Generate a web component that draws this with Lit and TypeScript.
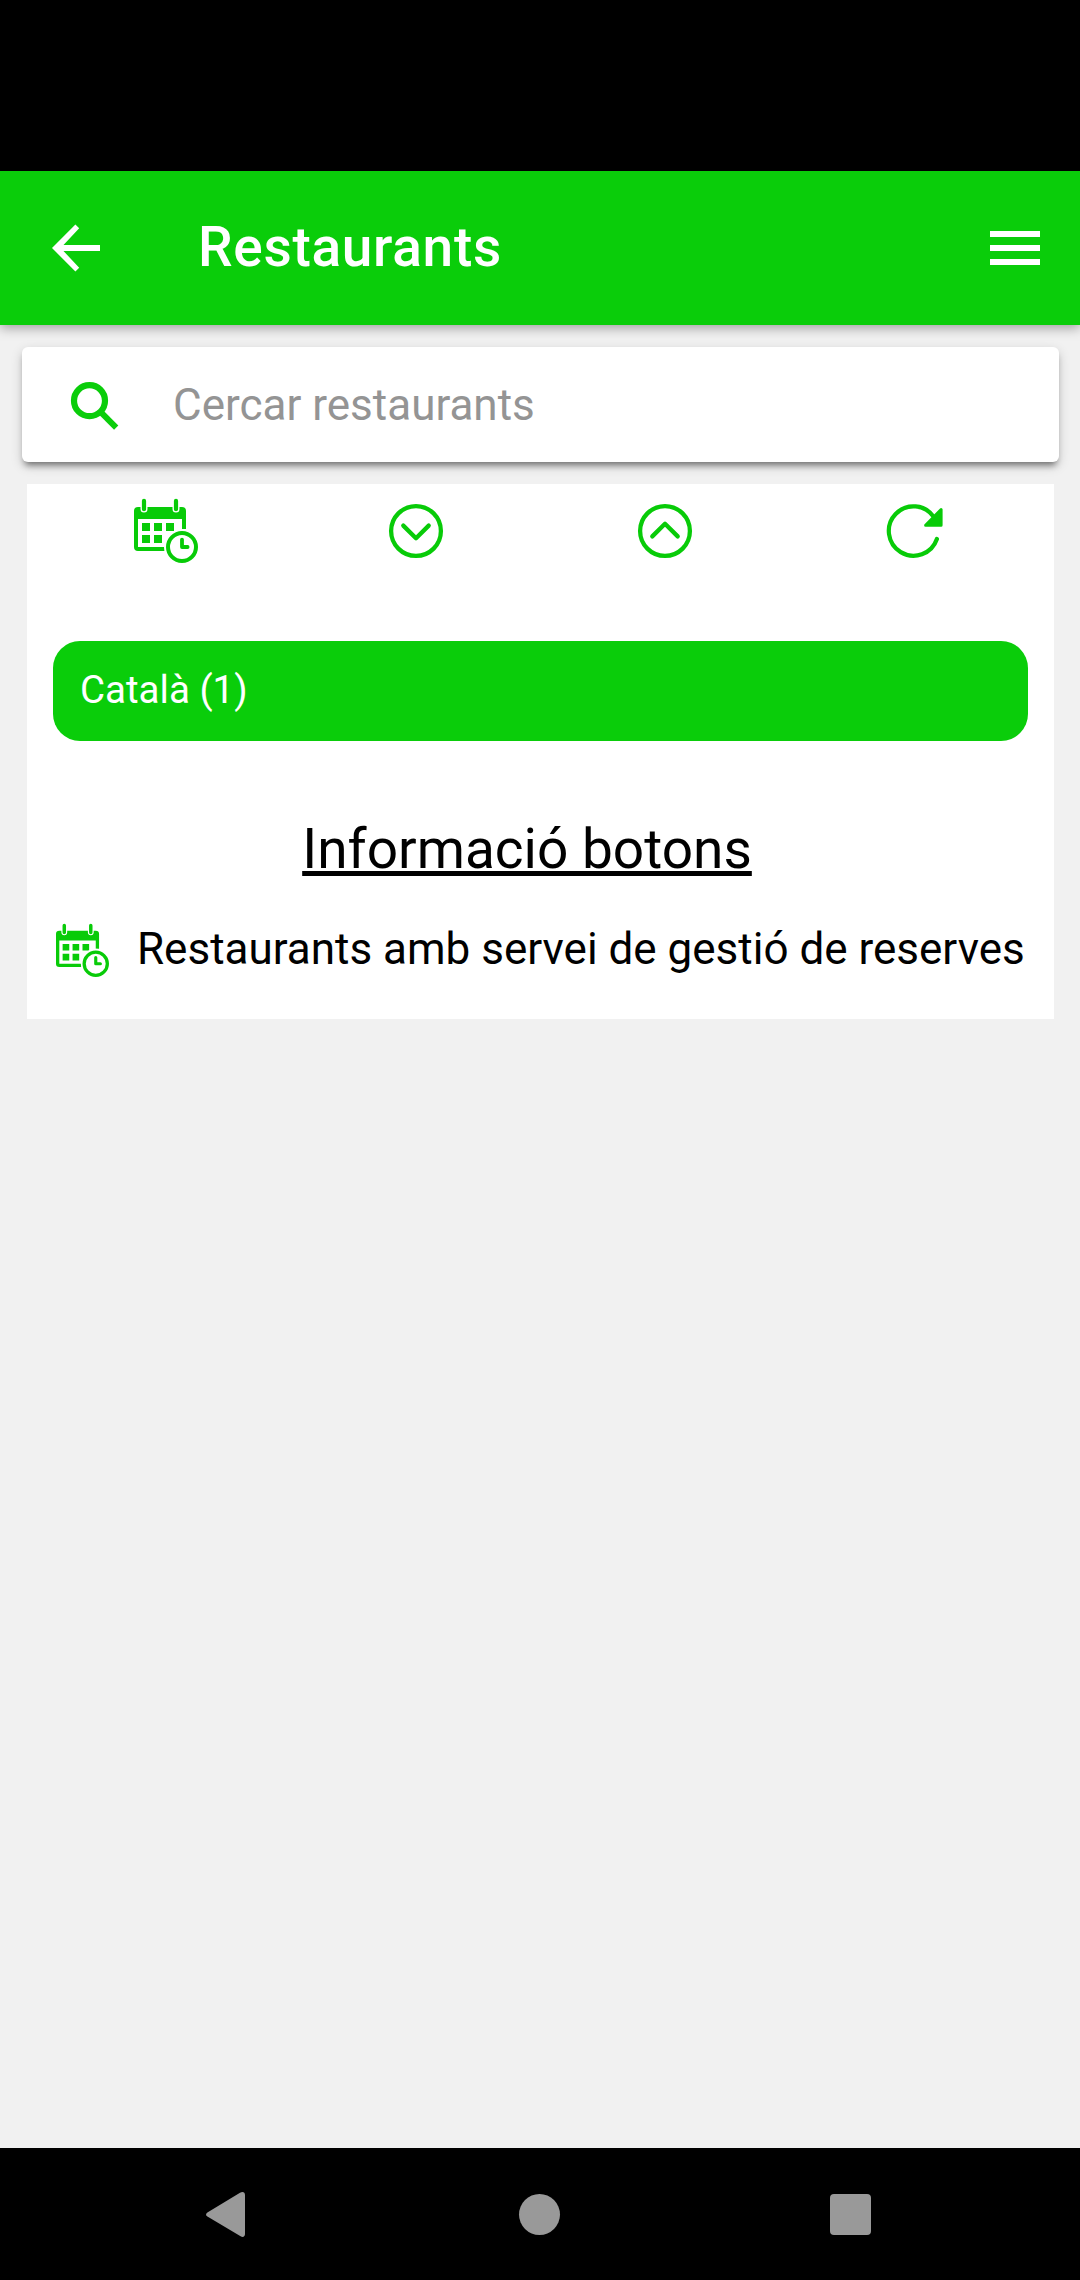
import { LitElement, html, css, svg } from "lit";
import { customElement, property } from "lit/decorators.js";

const shapes: Record<string, { box: string; body: unknown }> = {
  back: {
    box: "0 0 48 48",
    body: svg`<path fill="currentColor" d="M48 21H11.5L27.2 4.2 23.4 .5 0 24 23.4 47.5 27.2 43.8 11.5 27H48z"/>`,
  },
  menu: {
    box: "0 0 50 34",
    body: svg`<path fill="currentColor" d="M0 0h50v6H0zM0 14h50v6H0zM0 28h50v6H0z"/>`,
  },
  search: {
    box: "0 0 48 48",
    body: svg`<g fill="none" stroke="currentColor"><circle cx="18.5" cy="18.7" r="15.5" stroke-width="6.2"/><path d="M29 29.3L45.2 45.6" stroke-width="6"/></g>`,
  },
  calendar: {
    box: "0 0 64 64",
    body: svg`
      <path fill="currentColor" d="M4 8H48a4 4 0 0 1 4 4V30H48V20H4V48H31V52H4a4 4 0 0 1-4-4V12a4 4 0 0 1 4-4z"/>
      <path stroke="#fff" stroke-width="7" stroke-linecap="round" d="M10 2V10M42 2V10"/>
      <path stroke="currentColor" stroke-width="4.2" stroke-linecap="round" d="M10 1.8V10.2M42 1.8V10.2"/>
      <path fill="currentColor" d="M8 24h8v8H8zM20 24h8v8h-8zM32 24h8v8h-8zM8 36h8v8H8zM20 36h8v8h-8z"/>
      <circle cx="48" cy="48" r="18" fill="#fff"/>
      <circle cx="48" cy="48" r="14" fill="none" stroke="currentColor" stroke-width="4"/>
      <path fill="none" stroke="currentColor" stroke-width="3.8" stroke-linecap="round" stroke-linejoin="round" d="M48 40.6V48H53.6"/>`,
  },
  down: {
    box: "0 0 54 54",
    body: svg`<g fill="none" stroke="currentColor" stroke-width="4.3" stroke-linecap="round" stroke-linejoin="round"><circle cx="27" cy="27" r="24.9"/><path d="M14.3 21.6L27 34.2 39.7 21.6"/></g>`,
  },
  up: {
    box: "0 0 54 54",
    body: svg`<g fill="none" stroke="currentColor" stroke-width="4.3" stroke-linecap="round" stroke-linejoin="round"><circle cx="27" cy="27" r="24.9"/><path d="M14.3 32.4L27 19.8 39.7 32.4"/></g>`,
  },
  refresh: {
    box: "0 0 56 56",
    body: svg`
      <path fill="none" stroke="currentColor" stroke-width="4.2" stroke-linecap="round" d="M49.9 36A24.7 24.7 0 1 1 47 14.2"/>
      <path fill="currentColor" stroke="currentColor" stroke-width="3" stroke-linejoin="round" d="M54.1 6.6V22.3H38.6z"/>`,
  },
  navBack: {
    box: "0 0 39 45",
    body: svg`<path fill="currentColor" d="M34 .8C37 -1 39 .6 39 3V42C39 44.4 37 46 34.6 44.2L1.4 24.6C-.4 23.4 -.4 21.6 1.4 20.4z"/>`,
  },
  navHome: {
    box: "0 0 40 40",
    body: svg`<circle cx="20" cy="20" r="20" fill="currentColor"/>`,
  },
  navRecent: {
    box: "0 0 41 41",
    body: svg`<rect width="41" height="41" rx="4" fill="currentColor"/>`,
  },
};

@customElement("ui-icon")
class UiIcon extends LitElement {
  @property() name = "";
  static styles = css`
    :host { display: block; flex: none; }
    .glyph { display: block; width: 100%; height: 100%; overflow: visible; }
  `;
  render() {
    const shape = shapes[this.name];
    return html`<svg class="glyph" viewBox=${shape.box}>${shape.body}</svg>`;
  }
}

@customElement("app-root")
class AppRoot extends LitElement {
  static styles = css`
    :host {
      display: flex;
      flex-direction: column;
      height: 2280px;
      background: #f1f1f1;
      font-family: Roboto, sans-serif;
      color: #000;
    }
    * { box-sizing: border-box; }
    .status { height: 171px; background: #000; flex: none; }
    .toolbar {
      height: 154px;
      flex: none;
      display: flex;
      align-items: center;
      padding: 0 40px 0 52px;
      background: #0acd0a;
      color: #fff;
      box-shadow: 0 3px 11px rgba(0, 0, 0, 0.34);
    }
    .back { width: 48px; height: 48px; }
    .title {
      flex: 1;
      margin: -3px 0 0 98px;
      font-size: 55px;
      font-weight: 500;
      line-height: 66px;
      letter-spacing: 0.69px;
      white-space: nowrap;
    }
    .menu { width: 50px; height: 34px; }
    .content { flex: 1; padding: 22px 26px 0 22px; }
    .search {
      height: 115px;
      margin-right: -5px;
      padding: 0 49px;
      display: flex;
      align-items: center;
      gap: 54px;
      background: #fff;
      border-radius: 6px;
      box-shadow: 0 6px 6px -3px rgba(0, 0, 0, 0.45), 0 4px 12px rgba(0, 0, 0, 0.18);
    }
    .lens { width: 48px; height: 48px; color: #0acd0a; margin-top: 2px; }
    .placeholder { font-size: 44px; line-height: 52px; color: #949494; }
    .card {
      height: 535px;
      margin: 22px 0 0 5px;
      padding: 15px 26px 0;
      background: #fff;
    }
    .actions {
      display: grid;
      grid-template-columns: repeat(4, 1fr);
      justify-items: center;
      align-items: center;
      height: 64px;
      margin: 0 -12px;
      color: #08cb08;
    }
    .action { width: 54px; height: 54px; }
    .action.wide { width: 64px; height: 64px; }
    .action.reload { width: 56px; height: 56px; margin-right: 1px; }
    .group {
      height: 100px;
      margin-top: 78px;
      padding: 0 27px 4px;
      display: flex;
      align-items: center;
      border-radius: 27px;
      background: #0acd0a;
      color: #fff;
      font-size: 38.5px;
    }
    .heading {
      margin: 74px 27px 0 0;
      text-align: center;
      font-size: 55px;
      font-weight: 400;
      line-height: 68px;
      text-decoration: underline;
      text-decoration-thickness: 5px;
      text-underline-offset: 3px;
      text-decoration-skip-ink: none;
    }
    .legend {
      display: flex;
      align-items: center;
      gap: 28px;
      margin-top: 39px;
      padding-left: 3px;
      font-size: 44px;
      line-height: 54px;
      white-space: nowrap;
    }
    .caption { margin-top: -1px; }
    .mark { width: 53px; height: 53px; margin-top: 2px; color: #08cb08; }
    .nav {
      height: 132px;
      flex: none;
      display: flex;
      justify-content: space-between;
      align-items: center;
      padding: 0 209px 0 206px;
      background: #000;
      color: #999;
    }
    .key { width: 41px; height: 41px; }
    .key.tri { width: 39px; height: 45px; }
    .key.home { margin-left: 4px; }
  `;

  render() {
    return html`
      <div class="status"></div>
      <header class="toolbar">
        <ui-icon class="back" name="back"></ui-icon>
        <h1 class="title">Restaurants</h1>
        <ui-icon class="menu" name="menu"></ui-icon>
      </header>
      <main class="content">
        <div class="search">
          <ui-icon class="lens" name="search"></ui-icon>
          <span class="placeholder">Cercar restaurants</span>
        </div>
        <section class="card">
          <div class="actions">
            <ui-icon class="action wide" name="calendar"></ui-icon>
            <ui-icon class="action" name="down"></ui-icon>
            <ui-icon class="action" name="up"></ui-icon>
            <ui-icon class="action reload" name="refresh"></ui-icon>
          </div>
          <div class="group">Català (1)</div>
          <h2 class="heading">Informació botons</h2>
          <div class="legend">
            <ui-icon class="mark" name="calendar"></ui-icon>
            <span class="caption">Restaurants amb servei de gestió de reserves</span>
          </div>
        </section>
      </main>
      <nav class="nav">
        <ui-icon class="key tri" name="navBack"></ui-icon>
        <ui-icon class="key home" name="navHome"></ui-icon>
        <ui-icon class="key" name="navRecent"></ui-icon>
      </nav>
    `;
  }
}
